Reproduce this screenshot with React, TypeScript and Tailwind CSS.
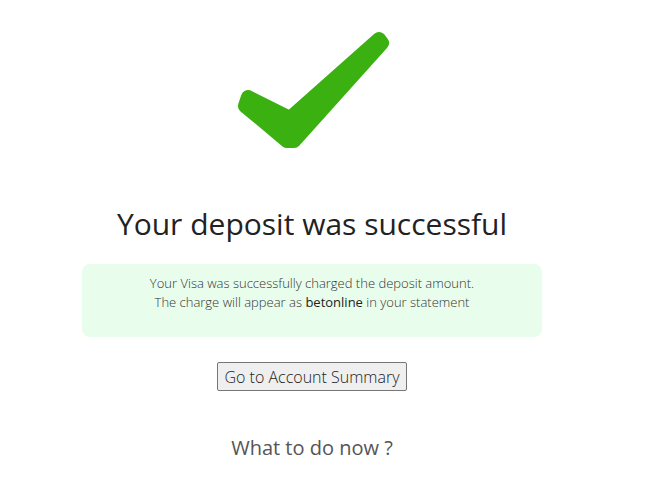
import React from 'react';

const CheckMark: React.FC = () => (
  <svg width="160" height="130" viewBox="232 25 160 130" className="block mx-auto">
    <polygon
      points="248,97 290,118 379,39 382,43 294,141 287,141 245,106"
      fill="#3bb011"
      stroke="#3bb011"
      strokeWidth="14"
      strokeLinejoin="round"
    />
  </svg>
);

const App: React.FC = () => {
  return (
    <div className="w-[624px] pt-[25px] text-center" style={{ fontFamily: '"Open Sans", sans-serif' }}>
      <CheckMark />
      <h1 className="mt-[49px] text-[30px] leading-[40px] text-[#222]">Your deposit was successful</h1>
      <div className="mx-auto mt-[20px] w-[460px] rounded-lg bg-[#e9fdec] pt-[10px] pb-[25px] text-[13px] leading-[19px] font-light text-[#333]">
        <p>Your Visa was successfully charged the deposit amount.</p>
        <p>
          The charge will appear as <span className="font-normal text-[#222]">betonline</span> in your statement
        </p>
      </div>
      <button className="mt-[25px] h-[29px] rounded-[2px] border border-[#767676] bg-[#efefef] px-[6px] text-[16px] font-light text-[#222]">
        Go to Account Summary
      </button>
      <h2 className="mt-[43px] text-[20px] leading-[28px] text-[#555]">What to do now ?</h2>
    </div>
  );
};

export default App;
